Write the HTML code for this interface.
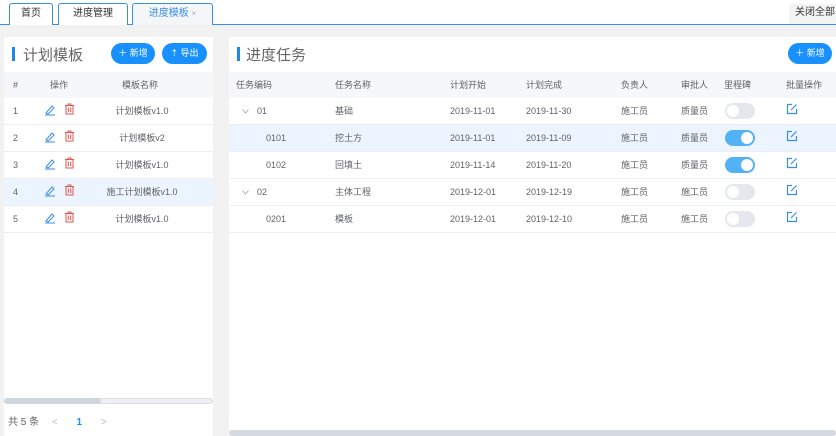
<!DOCTYPE html>
<html><head><meta charset="utf-8"><style>
*{margin:0;padding:0;box-sizing:border-box}
body{width:836px;height:436px;overflow:hidden;background:#f2f2f2;font-family:"Liberation Sans","Noto Sans CJK SC",sans-serif;font-size:9px;color:#606266;position:relative}
.abs{position:absolute}
.tabbar{left:0;top:0;width:836px;height:25px;background:#fff;border-bottom:1px solid #3a8ee6}
.tab{position:absolute;top:3px;height:22px;border:1px solid #3a8ee6;border-bottom:none;border-radius:3px 3px 0 0;font-size:10px;color:#333;line-height:20px;text-align:center;background:#fff}
.panel{background:#fff}
.ttl{font-size:15px;color:#666;font-weight:normal}
.bar{width:3px;height:14px;background:#1e88e5}
.btn{height:21px;border-radius:11px;background:#1890ff;color:#fff;font-size:9px;line-height:21px;text-align:center}
.hd{background:#f5f7fa;height:26px}
.row{height:27px;border-bottom:1px solid #ebeef5;background:#fff}
.hl{background:#ecf5ff}
.c{position:absolute;line-height:26px;white-space:nowrap}
.sw{position:absolute;width:30px;height:16px;border-radius:8px;background:#e4e7ed}
.sw i{position:absolute;top:2px;left:2px;width:12px;height:12px;border-radius:6px;background:#fff}
.sw.on{background:#52b2f5}.sw.on i{left:16px}
</style></head><body>
<div class="abs tabbar"></div>
<div class="tab" style="left:9px;width:44px">首页</div>
<div class="tab" style="left:58px;width:70px">进度管理</div>
<div class="tab" style="left:132px;width:81px;color:#3a8ee6;background:#f4f6f8">进度模板 <span style="color:#aaa;font-size:8px">×</span></div>
<div class="abs" style="left:789px;top:4px;width:47px;font-size:10px;color:#333;background:#f4f4f4;padding-left:6px;height:20px;line-height:18px;white-space:nowrap;overflow:hidden">关闭全部</div>

<div class="abs panel" style="left:4px;top:37px;width:209px;height:399px"></div>
<div class="abs bar" style="left:12px;top:47px"></div>
<div class="abs ttl" style="left:23px;top:44px">计划模板</div>
<div class="abs btn" style="left:111px;top:43px;width:44px">＋ 新增</div>
<div class="abs btn" style="left:162px;top:43px;width:45px">⇡ 导出</div>

<div class="abs panel" style="left:229px;top:37px;width:607px;height:399px"></div>
<div class="abs bar" style="left:237px;top:47px"></div>
<div class="abs ttl" style="left:246px;top:44px">进度任务</div>
<div class="abs btn" style="left:788px;top:43px;width:44px">＋ 新增</div>

<div class="abs" style="left:4px;top:72px;width:209px">
<div class="hd" style="position:relative"><span class="c" style="left:9px">#</span><span class="c" style="left:46px">操作</span><span class="c" style="left:118px">模板名称</span></div>
<div id="lt"></div>
</div>
<div class="abs" style="left:229px;top:72px;width:607px">
<div class="hd" style="position:relative"><span class="c" style="left:7px">任务编码</span><span class="c" style="left:106px">任务名称</span><span class="c" style="left:221px">计划开始</span><span class="c" style="left:297px">计划完成</span><span class="c" style="left:392px">负责人</span><span class="c" style="left:452px">审批人</span><span class="c" style="left:495px">里程碑</span><span class="c" style="left:557px">批量操作</span></div>
<div id="rt"></div>
</div>

<div class="abs" style="left:4px;top:398px;width:209px;height:6px;border-radius:3px;background:#eef0f3;border:1px solid #ddd"></div>
<div class="abs" style="left:4px;top:398px;width:97px;height:6px;border-radius:3px;background:#cfd6de"></div>
<div class="abs" style="left:8px;top:413px;font-size:10px">共 5 条 <span style="color:#bbb;margin-left:10px">&lt;</span> <span style="color:#1890ff;margin-left:16px;font-weight:bold">1</span> <span style="color:#bbb;margin-left:16px">&gt;</span></div>
<div class="abs" style="left:229px;top:430px;width:607px;height:6px;background:#d5dae0;border-radius:3px"></div>

<script>
var L=[["1","计划模板v1.0",0],["2","计划模板v2",0],["3","计划模板v1.0",0],["4","施工计划模板v1.0",1],["5","计划模板v1.0",0]];
var h="";
var pen='<svg class="c" style="left:40px;top:6px" width="12" height="12" viewBox="0 0 12 12"><path d="M2 9 L8 2 L10 4 L4 10 Z M1 11 H11" fill="none" stroke="#3a8ee6" stroke-width="1"/></svg>';
var bin='<svg class="c" style="left:60px;top:5px" width="11" height="12" viewBox="0 0 11 12"><path d="M1 2.5H10 M4 2.5V1H7V2.5 M2 2.5V11H9V2.5 M4.3 4.5V9 M6.7 4.5V9" fill="none" stroke="#e5534b" stroke-width="1"/></svg>';
L.forEach(function(r){h+='<div class="row'+(r[2]?' hl':'')+'" style="position:relative"><span class="c" style="left:9px">'+r[0]+'</span>'+pen+bin+'<span class="c" style="left:138px;transform:translateX(-50%)">'+r[1]+'</span></div>'});
document.getElementById("lt").innerHTML=h;
var R=[["01","基础","2019-11-01","2019-11-30","施工员","质量员",0,0,1],["0101","挖土方","2019-11-01","2019-11-09","施工员","质量员",1,1,0],["0102","回填土","2019-11-14","2019-11-20","施工员","质量员",1,0,0],["02","主体工程","2019-12-01","2019-12-19","施工员","施工员",0,0,1],["0201","模板","2019-12-01","2019-12-10","施工员","施工员",0,0,0]];
h="";
var ed='<svg class="c" style="left:557px;top:5px" width="12" height="12" viewBox="0 0 12 12"><path d="M6 1.5H1.5V10.5H10.5V6 M5 7L10.5 1.5" fill="none" stroke="#3a8ee6" stroke-width="1.2"/></svg>';
var chev='<svg class="c" style="left:13px;top:11px" width="7" height="5" viewBox="0 0 7 5"><path d="M0.5 0.5L3.5 4L6.5 0.5" fill="none" stroke="#aaa" stroke-width="0.9"/></svg>';
R.forEach(function(r){var p=r[8]?chev+'<span class="c" style="left:28px">'+r[0]+'</span>':'<span class="c" style="left:37px">'+r[0]+'</span>';
h+='<div class="row'+(r[7]?' hl':'')+'" style="position:relative">'+p+'<span class="c" style="left:106px">'+r[1]+'</span><span class="c" style="left:221px">'+r[2]+'</span><span class="c" style="left:297px">'+r[3]+'</span><span class="c" style="left:392px">'+r[4]+'</span><span class="c" style="left:452px">'+r[5]+'</span><div class="sw'+(r[6]?' on':'')+'" style="left:496px;top:5px"><i></i></div>'+ed+'</div>'});
document.getElementById("rt").innerHTML=h;
</script>
</body></html>
